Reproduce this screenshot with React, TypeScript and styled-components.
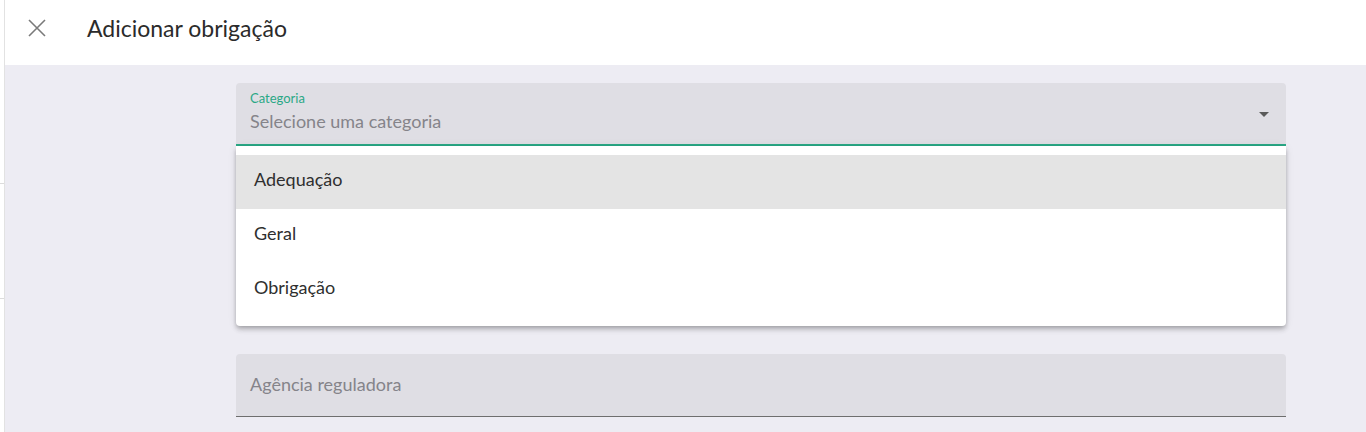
import React from 'react'
import styled, { createGlobalStyle } from 'styled-components'

const GlobalStyle = createGlobalStyle`
  html, body {
    margin: 0;
    padding: 0;
    background: #ffffff;
    font-family: Lato, 'Open Sans', sans-serif;
  }
`

const options = ['Adequação', 'Geral', 'Obrigação']

const App = () => {
  return (
    <>
      <GlobalStyle />
      <Page>
        <SideStrip>
          <Tick top={183} />
          <Tick top={298} />
        </SideStrip>
        <Dialog>
          <Header>
            <CloseButton aria-label="Fechar">
              <svg width="18" height="18" viewBox="0 0 18 18">
                <path d="M1 1 L17 17 M17 1 L1 17" stroke="#7a7a7a" strokeWidth="1.6" fill="none" />
              </svg>
            </CloseButton>
            <Title>Adicionar obrigação</Title>
          </Header>
          <Body>
            <Form>
              <SelectWrap>
                <Field focused>
                  <FieldText>
                    <Label>Categoria</Label>
                    <Placeholder labelled>Selecione uma categoria</Placeholder>
                  </FieldText>
                  <Arrow />
                </Field>
                <Menu>
                  {options.map((opt, i) => (
                    <MenuItem key={opt} active={i === 0}>
                      {opt}
                    </MenuItem>
                  ))}
                </Menu>
              </SelectWrap>
              <Field>
                <FieldText>
                  <Placeholder>Agência reguladora</Placeholder>
                </FieldText>
              </Field>
            </Form>
          </Body>
        </Dialog>
      </Page>
    </>
  )
}

export default App

const Page = styled.div`
  display: flex;
  width: 1366px;
  height: 432px;
  overflow: hidden;
`

const SideStrip = styled.div`
  position: relative;
  width: 4px;
  flex-shrink: 0;
  background: #ffffff;
  border-right: 1px solid #e2e2e2;
`

const Tick = styled.div<{ top: number }>`
  position: absolute;
  left: 0;
  top: ${(p) => p.top}px;
  width: 4px;
  height: 1px;
  background: #dcdcdc;
`

const Dialog = styled.div`
  flex: 1;
  display: flex;
  flex-direction: column;
  background: #edecf3;
`

const Header = styled.div`
  height: 65px;
  flex-shrink: 0;
  display: flex;
  align-items: center;
  background: #ffffff;
  padding-left: 22px;
  box-sizing: border-box;
`

const CloseButton = styled.button`
  width: 20px;
  height: 20px;
  padding: 0;
  border: none;
  background: none;
  display: flex;
  align-items: center;
  justify-content: center;
  margin-top: -10px;
`

const Title = styled.h1`
  margin: -10px 0 0 40px;
  font-size: 23px;
  font-weight: 400;
  color: #2b2b2b;
`

const Body = styled.div`
  flex: 1;
  padding: 18px 0 0 231px;
`

const Form = styled.div`
  width: 1050px;
  display: flex;
  flex-direction: column;
  gap: 28px;
`

const SelectWrap = styled.div`
  display: flex;
  flex-direction: column;
`

const Field = styled.div<{ focused?: boolean }>`
  height: 63px;
  box-sizing: border-box;
  display: flex;
  align-items: center;
  padding: 0 14px;
  background: #dfdee4;
  border-radius: 4px 4px 0 0;
  border-bottom: ${(p) => (p.focused ? '2px solid #2aa886' : '1px solid #6e6e6e')};
`

const FieldText = styled.div`
  flex: 1;
  display: flex;
  flex-direction: column;
  justify-content: center;
`

const Label = styled.span`
  font-size: 13px;
  color: #2aa886;
  line-height: 14px;
  margin-top: -4px;
`

const Placeholder = styled.span<{ labelled?: boolean }>`
  font-size: 18px;
  color: #85848a;
  line-height: 24px;
  margin-top: ${(p) => (p.labelled ? '4px' : '-2px')};
`

const Arrow = styled.div`
  width: 0;
  height: 0;
  border-left: 5px solid transparent;
  border-right: 5px solid transparent;
  border-top: 5px solid #5a5a5a;
  margin-right: 3px;
  margin-top: 1px;
`

const Menu = styled.div`
  background: #ffffff;
  padding: 9px 0 9px;
  border-radius: 0 0 4px 4px;
  box-shadow: 0 2px 4px -1px rgba(0, 0, 0, 0.2), 0 4px 5px 0 rgba(0, 0, 0, 0.14),
    0 1px 10px 0 rgba(0, 0, 0, 0.08);
`

const MenuItem = styled.div<{ active?: boolean }>`
  height: 54px;
  display: flex;
  align-items: center;
  padding: 0 18px 6px;
  box-sizing: border-box;
  font-size: 18px;
  color: #2f2f2f;
  background: ${(p) => (p.active ? '#e4e4e4' : '#ffffff')};
`
